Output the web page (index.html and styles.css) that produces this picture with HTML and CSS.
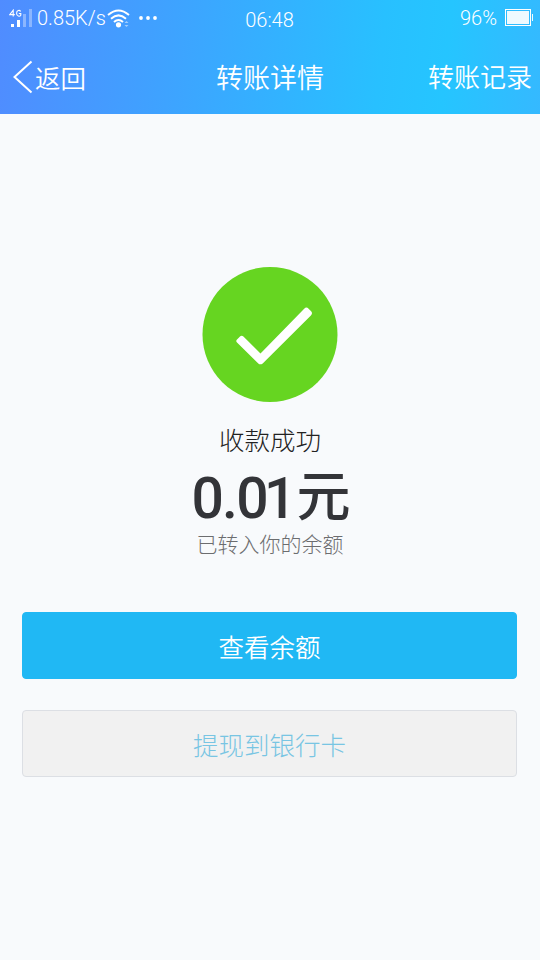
FILE: index.html
```html
<!DOCTYPE html>
<html lang="zh-CN">
<head>
<meta charset="utf-8">
<title>转账详情</title>
<link rel="stylesheet" href="styles.css">
</head>
<body>
<header class="header">
  <div class="status">
    <div class="status-left">
      <svg class="signal" width="24" height="20" viewBox="0 0 24 20">
        <g fill="none" stroke="#fff" stroke-width="1.1">
          <path d="M4.200 7.500V1.200L.8 5.600h5"/>
          <path d="M11.600 2.400C10.800.8 7.600.8 7.600 4.200s3.200 3.600 4.200 2V4.500H9.800"/>
        </g>
        <path fill="#fff" d="M2 15h3v3H2zM8 11h3v7H8z"/>
        <path fill="#fff" opacity=".35" d="M14 5h3v13h-3zM20 0h3v18h-3z"/>
      </svg>
      <span class="speed">0.85K/s</span>
      <svg class="wifi" width="24" height="20" viewBox="0 0 24 20">
        <g fill="none" stroke="#fff" stroke-width="2">
          <path d="M1 6Q11.500-3 22 6"/>
          <path d="M4 9.700Q11.500 3 19 9.700"/>
          <path d="M7 13Q11.500 9 16 13"/>
        </g>
        <circle cx="11.500" cy="15.800" r="2.600" fill="#fff"/>
        <path d="M17.500 14l2-2 2 2zM17.500 16l2 2 2-2z" fill="#fff" opacity=".5"/>
      </svg>
      <svg class="dots" width="20" height="6" viewBox="0 0 20 6" fill="#fff"><circle cx="3" cy="3" r="1.900"/><circle cx="10" cy="3" r="1.900"/><circle cx="17" cy="3" r="1.900"/></svg>
    </div>
    <span class="clock">06:48</span>
    <div class="status-right">
      <span>96%</span>
      <svg class="battery" width="30" height="18" viewBox="0 0 30 18">
        <rect x="1.500" y=".5" width="25" height="16" fill="none" stroke="#fff"/>
        <path fill="#fff" fill-opacity=".92" d="M3 2h22v13H3zM28 5h1v7h-1z"/>
      </svg>
    </div>
  </div>
  <nav class="nav">
    <a class="back">
      <svg width="20" height="34" viewBox="0 0 20 34"><path d="M18.500 1.500L1.500 17l17 15.500" fill="none" stroke="#fff" stroke-width="2"/></svg>
      <span class="label">返回</span>
    </a>
    <h1 class="title">转账详情</h1>
    <a class="history">转账记录</a>
  </nav>
</header>
<main class="main">
  <svg class="success" width="136" height="136" viewBox="0 0 136 136">
    <circle cx="68" cy="68.500" r="67.500" fill="#66d521"/>
    <path d="M35 73.500l3-3q1.700-1.700 3.400 0L58.500 87.500 102.200 42.700q2.200-2.200 4.400 0l2.300 2.300q2.200 2.200 0 4.400L60.700 97.500q-2.400 1.700-4.400 0L35 76.500q-1.500-1.500 0-3z" fill="#fff"/>
  </svg>
  <p class="result">收款成功</p>
  <p class="amount"><span class="number">0.0<span class="one">1</span></span><span class="unit">元</span></p>
  <p class="note">已转入你的余额</p>
  <button class="button primary">查看余额</button>
  <button class="button secondary">提现到银行卡</button>
</main>
</body>
</html>
```
FILE: styles.css
```css
* { box-sizing: border-box; }
body {
  margin: 0;
  min-height: 960px;
  background: #f8fafc;
  font-family: "Noto Sans CJK SC", sans-serif;
  font-weight: 300;
}
p, h1 { margin: 0; font-weight: 300; }
.header {
  height: 114px;
  color: #fff;
  background: linear-gradient(96deg, #508cff 0%, #3ea3ff 32%, #28c0ff 70%, #25c5ff 82%, #35b9ff 100%);
}
.status {
  display: grid;
  grid-template-columns: 1fr auto 1fr;
  height: 40px;
  padding: 0 6px 0 9px;
  font-family: Roboto, sans-serif;
  font-size: 20px;
  line-height: 24px;
}
.status-left, .status-right { display: flex; align-items: flex-start; }
.status-left { padding-top: 6px; }
.status-right { justify-content: flex-end; padding-top: 6px; }
.signal { margin-top: 3px; }
.speed { width: 68px; margin-left: 4px; white-space: nowrap; }
.wifi { margin: 3px 0 0 2px; }
.dots { margin: 9px 0 0 7px; }
.clock { padding: 8px 4px 0 0; }
.battery { margin: 3px 0 0 7px; }
.nav {
  display: grid;
  grid-template-columns: 1fr auto 1fr;
  align-items: center;
  height: 74px;
  padding: 0 8px 0 13px;
}
.back, .title, .history { font-weight: 350; }
.back { display: flex; align-items: center; gap: 2px; font-size: 25.5px; }
.label { padding-bottom: 2px; }
.history { padding-bottom: 3px; }
.title { padding-bottom: 2px; font-size: 27px; margin-right: 5px; }
.history { justify-self: end; font-size: 26px; }
.main {
  display: flex;
  flex-direction: column;
  align-items: center;
  padding: 152px 22px 0;
}
.success { display: block; }
.result { margin-top: 19px; font-size: 25.5px; line-height: 36px; color: #222; }
.amount { display: flex; align-items: center; height: 71px; margin-left: 2px; color: #333438; }
.number {
  padding-top: 12px;
  font-family: Roboto, sans-serif;
  font-size: 57px;
  font-weight: 500;
  line-height: 70px;
  letter-spacing: -1.7px;
}
.one { margin: 0 3px 0 -3px; }
.unit { margin-left: -1px; font-size: 54px; font-weight: 500; line-height: 70px; }
.note { font-size: 21px; line-height: 30px; color: #6c6d6f; }
.button {
  width: 495px;
  height: 67px;
  margin-right: 1px;
  border: 1px solid #20b8f4;
  border-radius: 4px;
  font: 300 25.5px/36px "Noto Sans CJK SC", sans-serif;
}
.primary { margin-top: 54px; background: #20b8f4; color: #fff; font-weight: 350; }
.secondary { margin-top: 31px; background: #f1f1f1; border-color: #dcdfe4; color: #78c5e3; }
```
